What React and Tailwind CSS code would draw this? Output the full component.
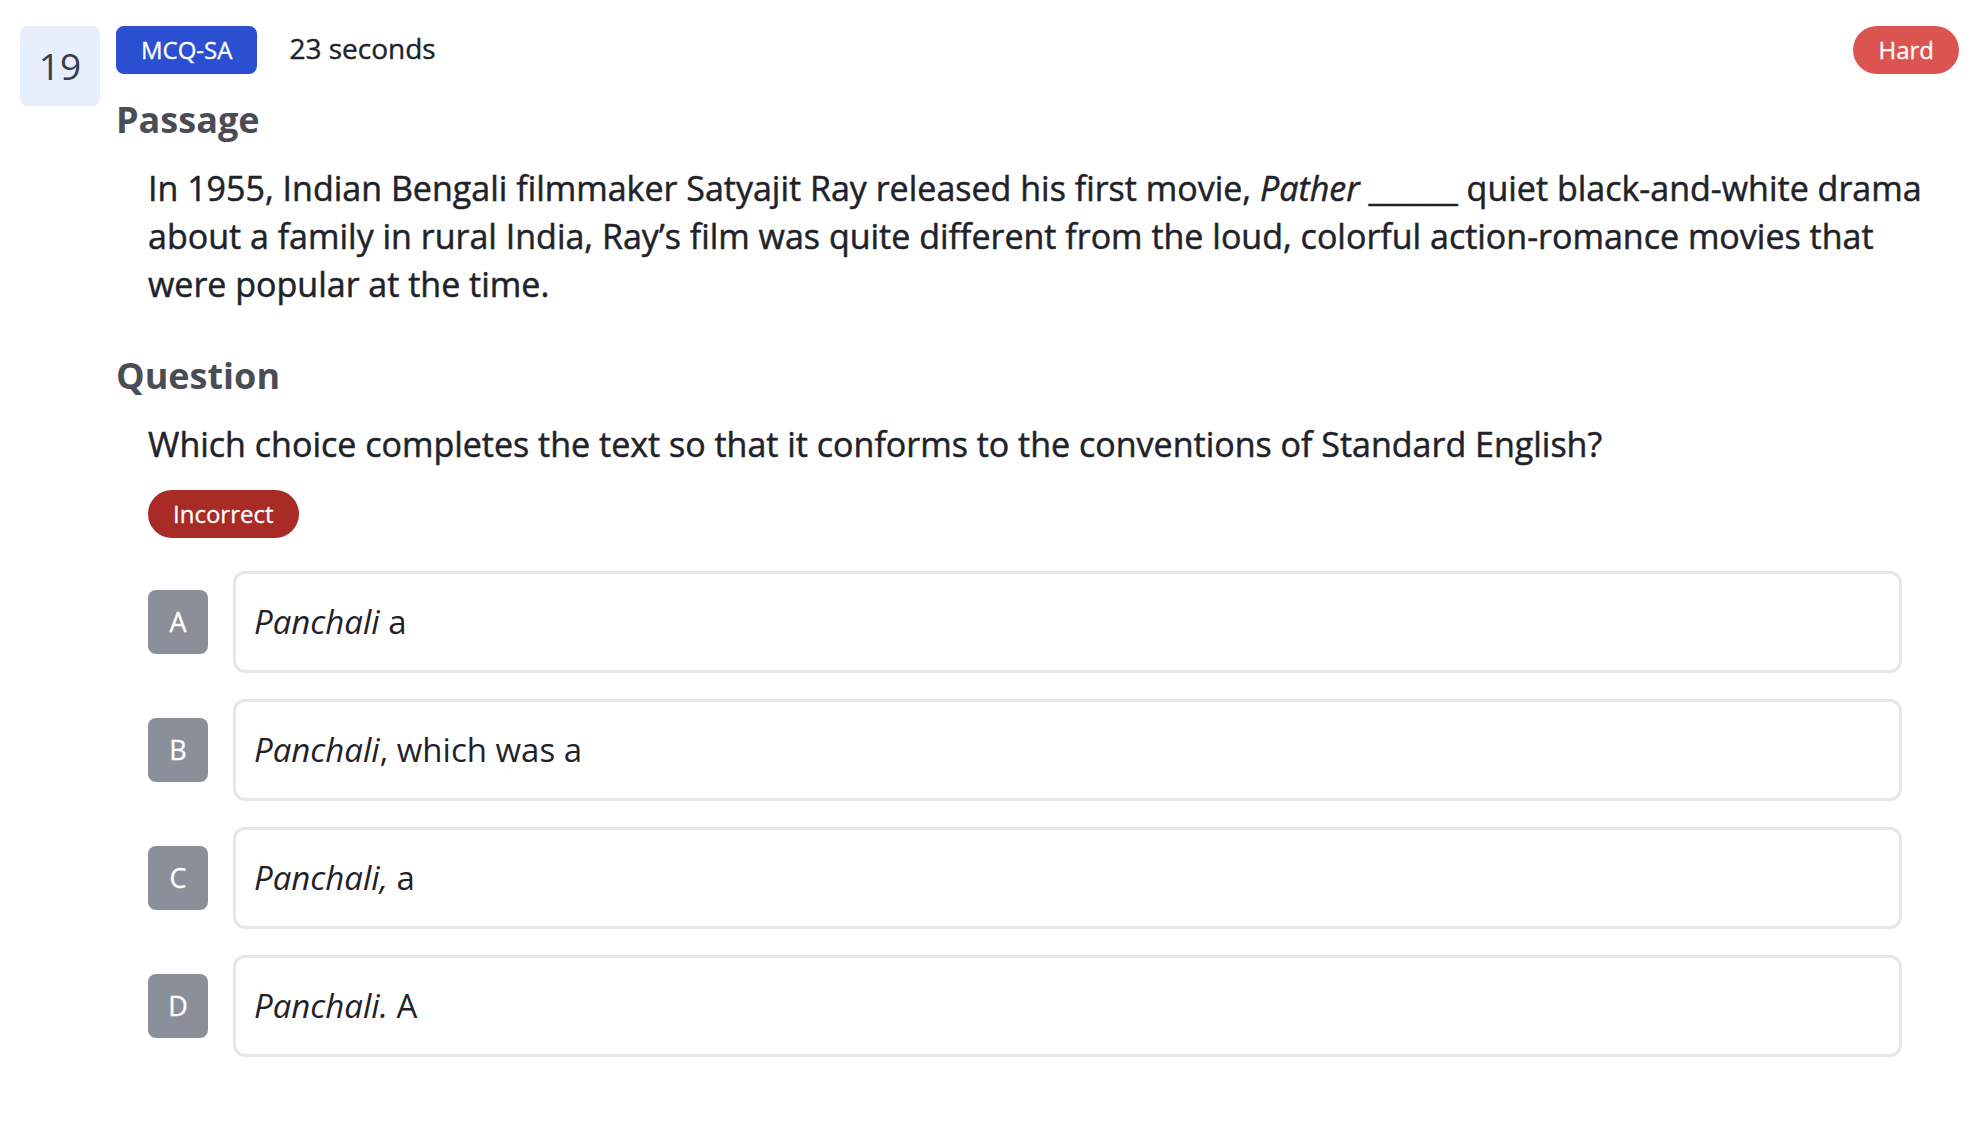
import React from "react";

const options = [
  { letter: "A", it: "Panchali", rest: " a" },
  { letter: "B", it: "Panchali", rest: ", which was a" },
  { letter: "C", it: "Panchali,", rest: " a" },
  { letter: "D", it: "Panchali.", rest: " A" },
];

export default function App() {
  return (
    <div
      className="min-h-screen bg-white text-[#1f2329]"
      style={{ fontFamily: '"Open Sans", "Noto Sans", sans-serif' }}
    >
      <div className="flex items-start gap-4 pl-5 pr-[25px] pt-[26px]">
        <div className="w-20 h-20 shrink-0 rounded-lg bg-[#e8effc] flex items-center justify-center text-[37px] text-[#3a3d45]">
          19
        </div>

        <div className="flex-1">
          {/* header row */}
          <div className="flex items-start">
            <span className="h-12 px-[25px] rounded-lg bg-[#2b4fd1] text-white text-[24px] flex items-center [-webkit-text-stroke:0.3px_currentColor]">
              MCQ-SA
            </span>
            <span className="ml-[32px] mt-[2px] text-[28px] leading-[40px] [-webkit-text-stroke:0.4px_currentColor]">23 seconds</span>
            <span className="ml-auto h-12 px-[25px] rounded-full bg-[#dc5450] text-white text-[24px] flex items-center [-webkit-text-stroke:0.3px_currentColor]">
              Hard
            </span>
          </div>

          {/* passage */}
          <h2 className="mt-[24px] text-[36px] leading-[44px] font-bold text-[#4b4d55]">Passage</h2>
          <p className="mt-[22px] pl-8 pr-4 text-[34px] leading-[48px] [-webkit-text-stroke:0.5px_currentColor]">
            In 1955, Indian Bengali filmmaker Satyajit Ray released his first movie, <em>Pather</em> ______ quiet
            black-and-white drama about a family in rural India, Ray’s film was quite different from the loud,
            colorful action-romance movies that were popular at the time.
          </p>

          {/* question */}
          <h2 className="mt-[46px] text-[36px] leading-[44px] font-bold text-[#4b4d55]">Question</h2>
          <p className="mt-[22px] pl-8 text-[34px] leading-[48px] [-webkit-text-stroke:0.5px_currentColor]">
            Which choice completes the text so that it conforms to the conventions of Standard English?
          </p>

          <div className="mt-[22px] pl-8">
            <span className="inline-flex h-12 px-[25px] items-center rounded-full bg-[#a82b26] text-white text-[24px] [-webkit-text-stroke:0.3px_currentColor]">
              Incorrect
            </span>
          </div>

          <div className="mt-[33px] pl-8 pr-[57px] flex flex-col gap-[26px]">
            {options.map((o) => (
              <div key={o.letter} className="flex items-center gap-[25px]">
                <div className="w-[60px] h-[64px] shrink-0 rounded-lg bg-[#8a8f99] text-white text-[27px] flex items-center justify-center [-webkit-text-stroke:0.3px_currentColor]">
                  {o.letter}
                </div>
                <div className="flex-1 h-[102px] rounded-xl border-[3px] border-[#e5e7eb] px-[18px] flex items-center text-[33px]">
                  <span>
                    <em>{o.it}</em>
                    {o.rest}
                  </span>
                </div>
              </div>
            ))}
          </div>
        </div>
      </div>
    </div>
  );
}
